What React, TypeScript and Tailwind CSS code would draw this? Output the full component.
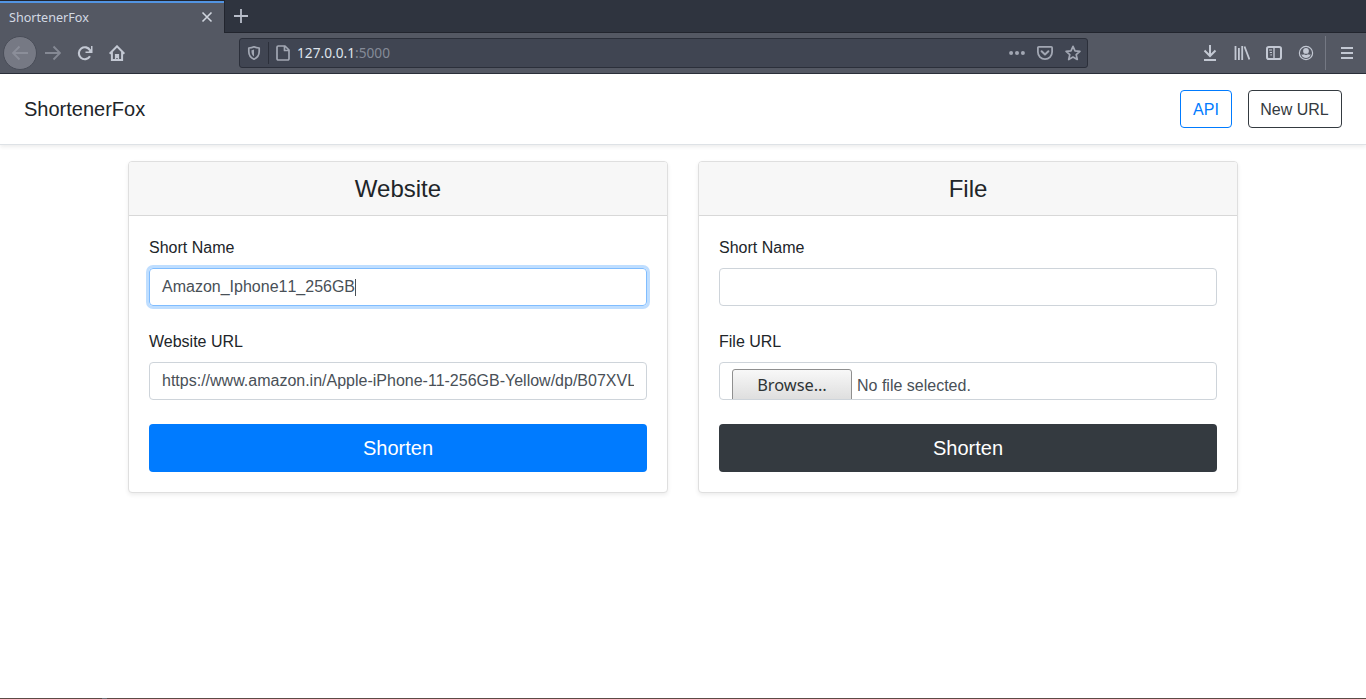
import React from "react";

type IconProps = { children: React.ReactNode; className?: string };

function Icon({ children, className = "" }: IconProps) {
  return (
    <svg
      viewBox="0 0 16 16"
      className={`block size-4 shrink-0 ${className}`}
      fill="none"
      stroke="currentColor"
      strokeWidth="2"
    >
      {children}
    </svg>
  );
}

function TabStrip() {
  return (
    <div className="flex h-[33px] bg-[#2f343f]">
      <div className="flex h-[33px] w-[225px] shrink-0 flex-col border-r border-t border-[#22252e] bg-[#545863]">
        <div className="h-0.5 bg-[#5294e2]" />
        <div className="flex flex-1 items-center justify-between pl-[9px] pr-[9px] text-[#d3dae3]">
          <span className="font-['Noto_Sans',sans-serif] text-[12.6px] leading-4">ShortenerFox</span>
          <Icon className="mb-[3px] text-[#d0d5de]">
            <path d="M3.5 3.5l9 9M12.5 3.5l-9 9" strokeWidth="1.6" />
          </Icon>
        </div>
      </div>
      <div className="flex flex-1 items-center border-b border-[#22252e] pl-2 text-[#b8bdc9]">
        <Icon>
          <path d="M8 1v14M1 8h14" strokeWidth="1.8" />
        </Icon>
      </div>
    </div>
  );
}

function AddressBar() {
  return (
    <div className="flex h-[30px] w-[849px] shrink-0 items-center rounded-[3px] border border-[#2b2f3a] bg-[#404552] pl-1.5 pr-1.5 text-[#a2a7b3]">
      <Icon>
        <path
          d="M8 1.8c1.7.8 3.3 1.1 5.2 1.2v3.5c0 3.4-1.8 6.2-5.2 7.7-3.4-1.5-5.2-4.3-5.2-7.7V3c1.9-.1 3.5-.4 5.2-1.2z"
          strokeWidth="1.7"
          strokeLinejoin="round"
        />
        <path d="M8 4.500v7C6.200 10.400 5.500 8.600 5.500 6.500V5.200c.9-.1 1.700-.3 2.500-.7z" fill="currentColor" stroke="none" />
      </Icon>
      <span className="ml-[6px] h-[22px] w-px bg-[#2b2f3a]" />
      <Icon className="ml-1.5">
        <path d="M3.200 1H10L14 5V13.800A1.200 1.200 0 0 1 12.800 15H3.200A1.200 1.200 0 0 1 2 13.800V2.200A1.200 1.200 0 0 1 3.200 1zM9.500 1v4.500H14" strokeWidth="1.700" strokeLinejoin="round" />
      </Icon>
      <span className="ml-1.5 flex-1 font-['Noto_Sans',sans-serif] text-[13.7px] leading-5 text-[#858b98]">
        <span className="text-[#dfe4ec]">127.0.0.1</span>:5000
      </span>
      <Icon>
        <g fill="currentColor" stroke="none">
          <circle cx="2.100" cy="8" r="2" />
          <circle cx="8" cy="8" r="2" />
          <circle cx="13.900" cy="8" r="2" />
        </g>
      </Icon>
      <Icon className="ml-3">
        <path d="M1.800 1.900h12.400a.9.900 0 0 1 .9.900V7A7.100 7.100 0 0 1 .9 7V2.800a.9.900 0 0 1 .9-.9z" strokeWidth="1.800" />
        <path d="M4.600 6.200L8 9.400l3.400-3.200" strokeLinecap="round" strokeLinejoin="round" />
      </Icon>
      <Icon className="ml-3">
        <path d="M8 1.300l2 4.500 4.900.5-3.700 3.300 1.100 4.900L8 12l-4.300 2.500 1.100-4.900L1.100 6.300 6 5.800z" strokeWidth="1.700" strokeLinejoin="round" />
      </Icon>
    </div>
  );
}

function Toolbar() {
  return (
    <div className="flex h-[41px] items-center border-b border-[#2b2f3a] bg-[#545863] text-[#c3c8d3]">
      <div className="flex w-[239px] shrink-0 items-center pl-[3px]">
        <span className="flex size-[34px] items-center justify-center rounded-full border border-[#494d58] bg-[#767984] text-[#8b8e99]">
          <Icon>
            <path d="M16 8H1.500M7.500 1.500L1 8l6.500 6.500" strokeWidth="1.900" />
          </Icon>
        </span>
        <Icon className="ml-2 text-[#858994]">
          <path d="M0 8h14.500M8.500 1.500L15 8l-6.500 6.500" strokeWidth="1.900" />
        </Icon>
        <Icon className="ml-4">
          <path d="M13.200 5.500A6 6 0 1 0 13 11.300" strokeWidth="2.100" />
          <path d="M15.500 1v7h-7V6.500h3.300L14 4V1z" fill="currentColor" stroke="none" />
        </Icon>
        <Icon className="ml-4">
          <path d="M.6 8.700L8 1.300l7.400 7.400M2.900 7v7.900h10.200V7" strokeWidth="2" />
          <path d="M5.900 15V9h4.200v6H8.700v-2H7.300v2z" fill="currentColor" stroke="none" />
        </Icon>
      </div>
      <AddressBar />
      <div className="flex h-full flex-1 items-center justify-end">
        <Icon>
          <path d="M8 0v10.500M2.500 5.500L8 11l5.500-5.500M2 15h12" />
        </Icon>
        <Icon className="ml-4">
          <path d="M1.500 1v14M4.900 3v12M8.200 1v14M10.500 1.500L15.400 14.500" strokeWidth="1.800" />
        </Icon>
        <Icon className="ml-4">
          <rect x="1" y="2" width="14" height="12" rx="1.800" strokeWidth="2" />
          <path d="M8 2v12" strokeWidth="1.400" />
          <path d="M3 5h3M3.800 7.500h2.200M4.300 9.900h1.700" strokeWidth="1" />
        </Icon>
        <Icon className="ml-4">
          <circle cx="8" cy="8" r="6.600" strokeWidth="1.200" />
          <circle cx="8" cy="5.900" r="2.900" fill="currentColor" stroke="none" />
          <path d="M3.400 9.300c1 .5 2 .4 2.600 0 1.200.8 2.800.8 4 0 .6.400 1.600.5 2.600 0-.4 2.500-2.300 3.700-4.600 3.700s-4.200-1.200-4.600-3.700z" fill="currentColor" stroke="none" />
        </Icon>
        <span className="ml-[11px] h-[34px] w-px bg-[#747883]" />
        <Icon className="ml-[13px] mr-[11px]">
          <path d="M2 3h12M2 8h12M2 13h12" />
        </Icon>
      </div>
    </div>
  );
}

function SiteHeader() {
  return (
    <header className="flex h-[71px] items-center justify-between border-b border-[#dee2e6] bg-white px-6 shadow-[0_2px_4px_rgba(0,0,0,0.075)]">
      <h5 className="text-xl leading-6 text-[#212529]">ShortenerFox</h5>
      <nav className="flex gap-4">
        <button className="h-[38px] w-[52px] rounded border border-[#007bff] pt-px text-base text-[#007bff]">API</button>
        <button className="h-[38px] w-[94px] rounded border border-[#343a40] pt-px pr-px text-base text-[#343a40]">New URL</button>
      </nav>
    </header>
  );
}

function Card({ title, children }: { title: string; children: React.ReactNode }) {
  return (
    <section className="h-[332px] w-[540px] rounded border border-[#dfdfdf] bg-white shadow-[0_2px_4px_rgba(0,0,0,0.075)]">
      <h4 className="h-[54px] rounded-t-[3px] border-b border-[#d8d8d8] bg-[#f7f7f7] py-3 text-center text-2xl leading-[29px]">
        {title}
      </h4>
      <div className="flex flex-col p-5">{children}</div>
    </section>
  );
}

function Field({ label, children }: { label: string; children: React.ReactNode }) {
  return (
    <div className="mb-6 flex flex-col gap-2">
      <label className="text-base leading-6">{label}</label>
      {children}
    </div>
  );
}

export default function App() {
  return (
    <div className="flex h-[699px] w-[1366px] flex-col overflow-hidden bg-white font-['Liberation_Sans',Arial,sans-serif] text-[#212529]">
      <TabStrip />
      <Toolbar />
      <SiteHeader />
      <main className="flex flex-1 items-start justify-center gap-[30px] pt-4">
        <Card title="Website">
          <Field label="Short Name">
            <div className="flex h-[38px] items-center rounded border border-[#80bdff] px-3 text-base leading-6 text-[#495057] shadow-[0_0_0_3px_rgba(0,123,255,0.25)] [font-kerning:none]">
              Amazon_Iphone11_256GB
              <span className="h-[17px] w-px bg-[#495057]" />
            </div>
          </Field>
          <Field label="Website URL">
            <div className="flex h-[38px] items-center rounded border border-[#ced4da] px-3 text-base leading-6 text-[#495057]">
              <span className="min-w-0 flex-1 overflow-hidden whitespace-nowrap">
                https://www.amazon.in/Apple-iPhone-11-256GB-Yellow/dp/B07XVL
              </span>
            </div>
          </Field>
          <button className="h-12 rounded-[4px] bg-[#007bff] text-xl text-white">Shorten</button>
        </Card>
        <Card title="File">
          <Field label="Short Name">
            <div className="h-[38px] rounded border border-[#ced4da]" />
          </Field>
          <Field label="File URL">
            <div className="flex h-[38px] items-start overflow-hidden rounded border border-[#ced4da] px-3 pt-1.5 text-base text-[#495057]">
              <span className="h-[34px] w-[120px] shrink-0 rounded-[3px] border border-[#8f8f8f] bg-linear-to-b from-[#f8f8f8] to-[#dcdcdc] text-center font-['Noto_Sans',sans-serif] text-[16.4px] leading-[29px] text-[#2e3436]">
                Browse…
              </span>
              <span className="ml-[5px] leading-[33px]">No file selected.</span>
            </div>
          </Field>
          <button className="h-12 rounded-[4px] bg-[#343a40] text-xl text-white">Shorten</button>
        </Card>
      </main>
      <footer className="flex h-px bg-[#5c4a45]">
        <span className="ml-[102px] w-[5px] bg-[#6d7278]" />
      </footer>
    </div>
  );
}
